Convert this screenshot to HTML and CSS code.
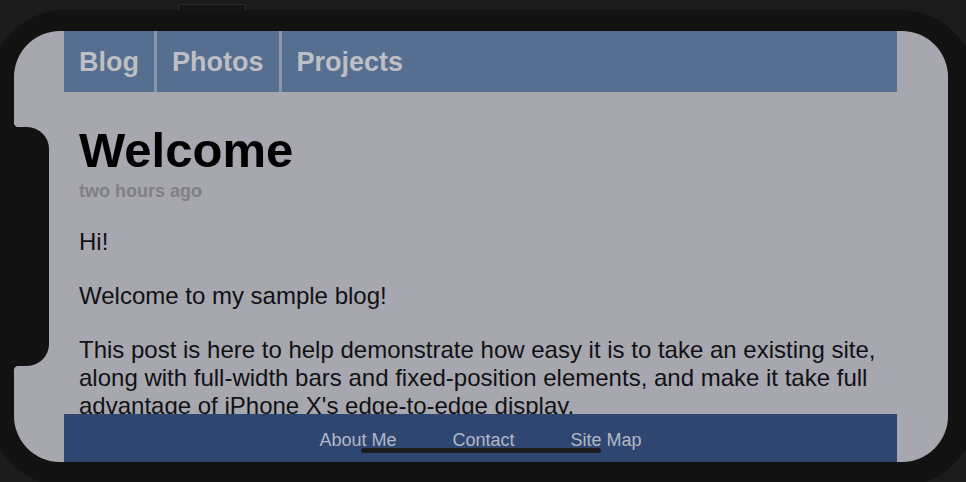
FILE: index.html
```html
<!DOCTYPE html>
<html lang="en">
<head>
<meta charset="utf-8">
<title>Welcome</title>
<link rel="stylesheet" href="styles.css">
</head>
<body>
<div class="device">
  <div class="side-button"></div>
  <div class="screen">
    <div class="page">
      <nav class="nav">
        <a class="nav-tab" href="#">Blog</a>
        <a class="nav-tab" href="#">Photos</a>
        <a class="nav-tab nav-tab-last" href="#">Projects</a>
      </nav>
      <main class="main">
        <h1 class="post-title">Welcome</h1>
        <div class="post-date">two hours ago</div>
        <p class="post-text">Hi!</p>
        <p class="post-text">Welcome to my sample blog!</p>
        <p class="post-text">This post is here to help demonstrate how easy it is to take an existing site, along with full-width bars and fixed-position elements, and make it take full advantage of iPhone X's edge-to-edge display.</p>
      </main>
      <footer class="footer">
        <a class="footer-link" href="#">About Me</a>
        <a class="footer-link" href="#">Contact</a>
        <a class="footer-link" href="#">Site Map</a>
      </footer>
    </div>
    <div class="home-indicator"></div>
  </div>
  <div class="sensor"></div>
</div>
</body>
</html>
```
FILE: styles.css
```css
html, body {
  margin: 0;
  padding: 0;
  overflow: hidden;
  background: #1b1b1b;
  height: 100%;
}

body {
  font-family: "Liberation Sans", Arial, Helvetica, sans-serif;
}

.device {
  position: relative;
  box-sizing: border-box;
  width: 986px;
  height: 476px;
  margin: 10px 0 0 -10px;
  padding: 21px 0 0 24px;
  background: #121212;
  border-radius: 75px;
}

.side-button {
  position: absolute;
  left: 188px;
  top: -6px;
  width: 66px;
  height: 6px;
  background: #141414;
  border: 1px solid #2a2a2a;
  border-bottom: none;
  border-radius: 3px 3px 0 0;
}

.screen {
  position: relative;
  width: 934px;
  height: 431px;
  border-radius: 46px;
  overflow: hidden;
  background: #a7a7b0;
}

.page {
  display: flex;
  flex-direction: column;
  height: 100%;
  margin: 0 51px 0 50px;
}

.nav {
  display: flex;
  flex: 0 0 61px;
  background: #566e8f;
}

.nav-tab {
  display: block;
  padding: 1px 15px 0;
  line-height: 60px;
  font-size: 27px;
  font-weight: bold;
  color: #bebec5;
  text-decoration: none;
  border-right: 3px solid #8c96a8;
}

.nav-tab-last {
  border-right: none;
}

.main {
  flex: 1 1 auto;
  min-height: 0;
  overflow: hidden;
  padding: 30px 15px 0;
}

.post-title {
  margin: 0;
  font-size: 49px;
  line-height: 56px;
  font-weight: bold;
  color: #000;
}

.post-date {
  margin-top: 2px;
  font-size: 18px;
  line-height: 22px;
  font-weight: bold;
  color: #808087;
}

.post-text {
  margin: 26px 0 0;
  font-size: 24px;
  line-height: 28px;
  color: #111114;
}

.footer {
  display: flex;
  justify-content: center;
  gap: 56px;
  flex: 0 0 48px;
  box-sizing: border-box;
  padding-top: 5px;
  background: #2e4670;
}

.footer-link {
  font-size: 18px;
  line-height: 43px;
  color: #b3b8c6;
  text-decoration: none;
}

.home-indicator {
  position: absolute;
  left: 50%;
  bottom: 9px;
  width: 240px;
  height: 5px;
  margin-left: -120px;
  border-radius: 3px;
  background: #1b1b20;
}

.sensor {
  position: absolute;
  left: 24px;
  top: 117px;
  width: 35px;
  height: 239px;
  background: #121212;
  border-radius: 0 22px 22px 0;
}

.sensor::before,
.sensor::after {
  content: "";
  position: absolute;
  left: 0;
  width: 5px;
  height: 5px;
}

.sensor::before {
  top: -5px;
  background: radial-gradient(circle at 100% 0, transparent 5px, #121212 5.5px);
}

.sensor::after {
  bottom: -5px;
  background: radial-gradient(circle at 100% 100%, transparent 5px, #121212 5.5px);
}
```
